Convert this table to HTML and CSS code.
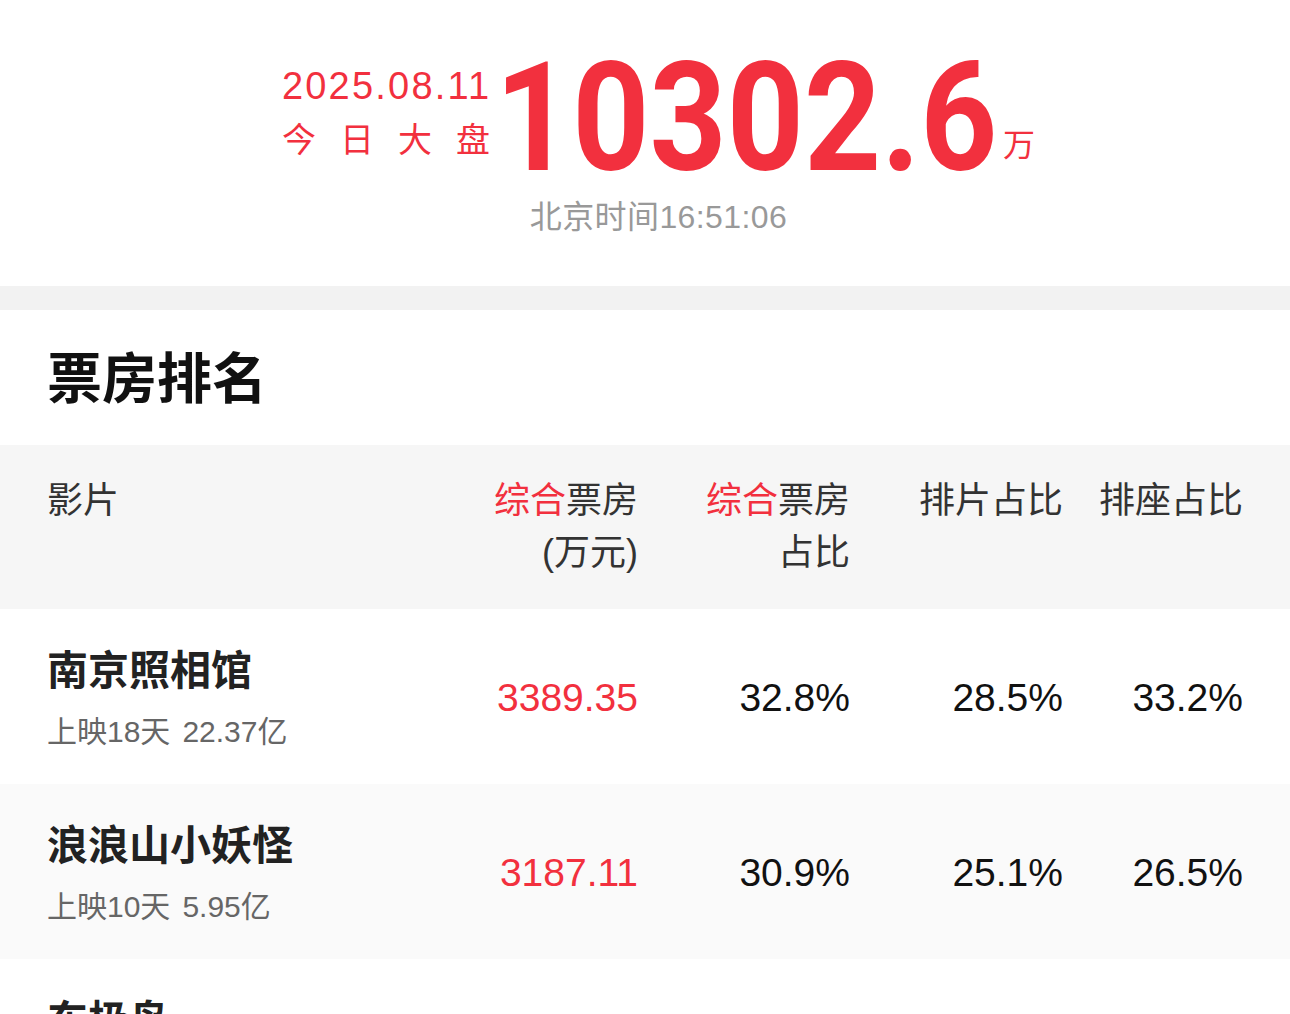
FILE: index.html
```html
<!DOCTYPE html>
<html lang="zh-CN">
<head>
  <meta charset="UTF-8" />
  <meta name="viewport" content="width=device-width, initial-scale=1.0" />
  <title>票房排名</title>
  <link rel="stylesheet" href="styles.css">
</head>
<body>
  <div class="summary">
    <div class="summary-main">
      <div class="summary-label">
        <div class="date">2025.08.11</div>
        <div class="today">今日大盘</div>
      </div>
      <span class="total">10302.6</span>
      <span class="unit">万</span>
    </div>
    <div class="clock">北京时间16:51:06</div>
  </div>

  <div class="divider"></div>

  <h2 class="section-title">票房排名</h2>

  <div class="table">
    <div class="row head">
      <div class="cell name">影片</div>
      <div class="cell"><span class="hl">综合</span>票房<br/>(万元)</div>
      <div class="cell"><span class="hl">综合</span>票房<br/>占比</div>
      <div class="cell">排片占比</div>
      <div class="cell">排座占比</div>
    </div>

    <div class="row">
      <div class="cell name">
        <div class="film">南京照相馆</div>
        <div class="meta">上映18天<span class="sum">22.37亿</span></div>
      </div>
      <div class="cell num red">3389.35</div>
      <div class="cell num">32.8%</div>
      <div class="cell num">28.5%</div>
      <div class="cell num">33.2%</div>
    </div>

    <div class="row alt">
      <div class="cell name">
        <div class="film">浪浪山小妖怪</div>
        <div class="meta">上映10天<span class="sum">5.95亿</span></div>
      </div>
      <div class="cell num red">3187.11</div>
      <div class="cell num">30.9%</div>
      <div class="cell num">25.1%</div>
      <div class="cell num">26.5%</div>
    </div>

    <div class="row">
      <div class="cell name">
        <div class="film">东极岛</div>
        <div class="meta">上映3天<span class="sum">1.12亿</span></div>
      </div>
      <div class="cell num red">1180.25</div>
      <div class="cell num">11.5%</div>
      <div class="cell num">15.2%</div>
      <div class="cell num">14.1%</div>
    </div>
  </div>
</body>
</html>
```

FILE: styles.css
```css
body {
  margin: 0;
  background: #fff;
  font-family: "Liberation Sans", "Noto Sans CJK SC", sans-serif;
  color: #222;
}

/* 顶部大盘 */
.summary {
  padding: 53px 0 49px 27px;
  text-align: center;
}
.summary-main {
  display: flex;
  justify-content: center;
  align-items: flex-start;
}
.summary-label {
  width: 208px;
  margin-top: 11px;
  margin-right: 5px;
  color: #f2303e;
  text-align: left;
}
.date {
  font-size: 38px;
  line-height: 44px;
  letter-spacing: 2.2px;
}
.today {
  margin-top: 12px;
  font-size: 34px;
  line-height: 40px;
  text-align: justify;
  text-align-last: justify;
}
.total {
  display: inline-block;
  font-family: Roboto, "Liberation Sans", sans-serif;
  font-weight: 700;
  font-size: 153px;
  line-height: 130px;
  color: #f2303e;
  transform: scaleX(0.88);
  transform-origin: left top;
  margin-right: -63px;
}
.unit {
  margin-top: 72px;
  font-size: 32px;
  line-height: 40px;
  color: #f2303e;
}
.clock {
  margin-top: 14px;
  font-size: 32px;
  line-height: 40px;
  letter-spacing: 0.4px;
  color: #999;
}

.divider {
  height: 24px;
  background: #f2f2f2;
}

.section-title {
  margin: 0;
  padding: 37px 47px 34px;
  font-size: 55px;
  line-height: 64px;
  font-weight: 700;
  color: #111;
}

/* 表格 */
.row {
  display: grid;
  grid-template-columns: 1fr 200px 212px 213px 180px;
  align-items: center;
  padding: 34px 47px 32px;
}
.row.head {
  align-items: start;
  padding: 30px 47px;
  background: #f6f6f6;
  font-size: 36px;
  line-height: 52px;
  color: #333;
}
.row.alt {
  background: #fafafa;
}
.cell {
  text-align: right;
}
.cell.name {
  text-align: left;
}
.hl {
  color: #f2303e;
}
.film {
  font-size: 41px;
  line-height: 56px;
  font-weight: 700;
  color: #222;
}
.meta {
  margin-top: 13px;
  font-size: 30px;
  line-height: 40px;
  color: #666;
}
.sum {
  margin-left: 12px;
}
.num {
  font-size: 39px;
  color: #111;
}
.num.red {
  color: #f2303e;
}
```
